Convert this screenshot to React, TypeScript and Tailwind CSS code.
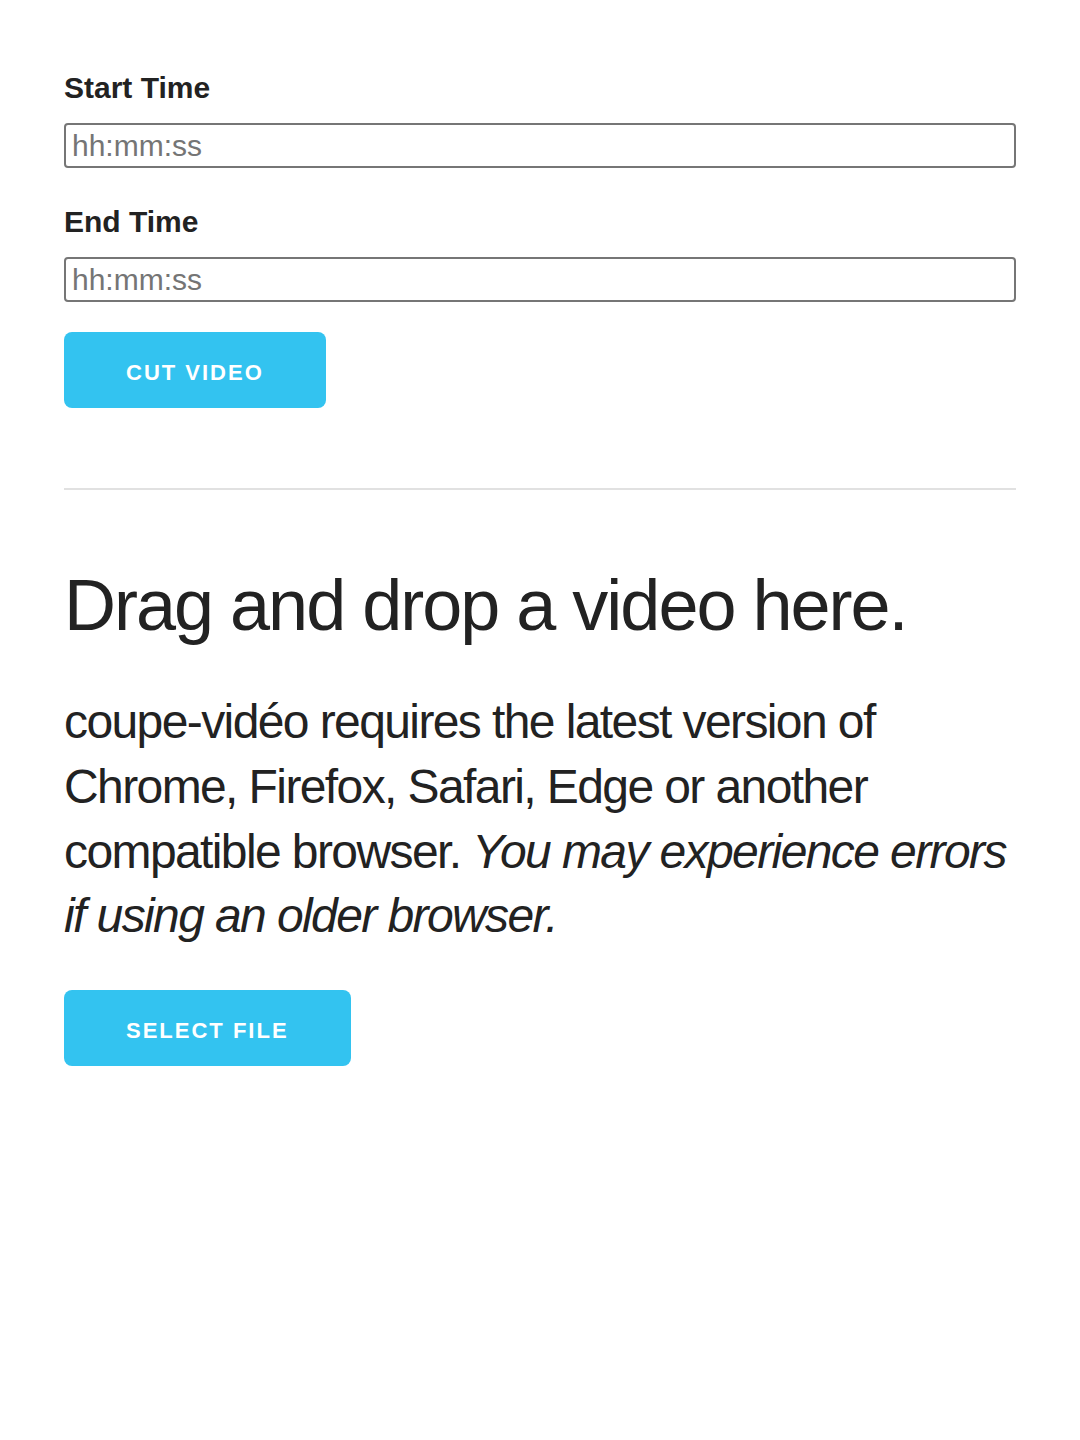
export default function App() {
  return (
    <div className="min-h-screen bg-white font-['Liberation_Sans',Arial,sans-serif] text-[#222]">
      <div className="px-16 pt-16">
        {/* ─── Cut form ─── */}
        <form onSubmit={(e) => e.preventDefault()}>
          <label className="block mb-[11px] text-[30px] leading-[48px] font-bold">Start Time</label>
          <input
            type="text"
            placeholder="hh:mm:ss"
            className="block mb-[30px] h-[45px] w-full rounded-[4px] border-2 border-[#767676] px-[6px] text-[30px] placeholder:text-[#757575] outline-none"
          />
          <label className="block mb-[11px] text-[30px] leading-[48px] font-bold">End Time</label>
          <input
            type="text"
            placeholder="hh:mm:ss"
            className="block mb-[30px] h-[45px] w-full rounded-[4px] border-2 border-[#767676] px-[6px] text-[30px] placeholder:text-[#757575] outline-none"
          />
          <button
            type="submit"
            className="block h-[76px] overflow-hidden rounded-[8px] bg-[#33c3f0] px-[62px] text-[22px] font-bold uppercase leading-[82px] tracking-[2px] text-white"
          >
            Cut Video
          </button>
        </form>

        <hr className="mt-[80px] mb-[70px] border-t-2 border-[#e1e1e1]" />

        {/* ─── Drop zone ─── */}
        <h2 className="mb-10 text-[72px] leading-[90px] font-light tracking-[-2px]">
          Drag and drop a video here.
        </h2>
        <h4 className="mb-[41px] text-[48px] leading-[64.8px] tracking-[-1.6px]">
          coupe-vidéo requires the latest version of Chrome, Firefox, Safari, Edge or another compatible browser.{" "}
          <em>You may experience errors if using an older browser.</em>
        </h4>
        <button
          type="button"
          className="block h-[76px] overflow-hidden rounded-[8px] bg-[#33c3f0] px-[62px] text-[22px] font-bold uppercase leading-[82px] tracking-[2px] text-white"
        >
          Select File
        </button>
      </div>
    </div>
  );
}
